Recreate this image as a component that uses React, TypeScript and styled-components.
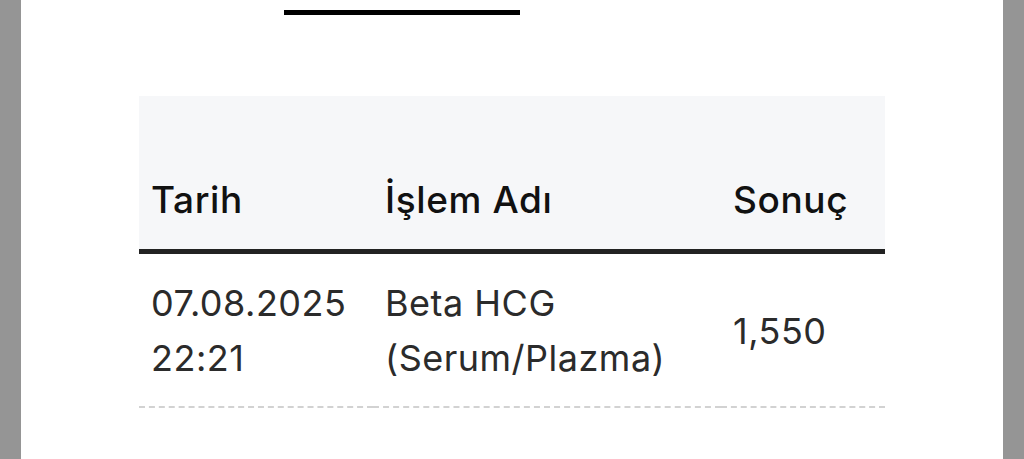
import React from 'react';
import styled, { createGlobalStyle } from 'styled-components'

const GlobalStyle = createGlobalStyle`
    html, body {
        margin: 0;
        padding: 0;
        background: #959595;
    }
    body {
        font-family: Inter, "Noto Sans", sans-serif;
    }
`

const Screen = styled.div`
    height: 459px;
    padding: 0 21px;
    background: #959595;
    overflow: hidden;
`

const Sheet = styled.div`
    height: 100%;
    background: #fff;
    padding-top: 10px;
    box-sizing: border-box;
`

const TabLine = styled.div`
    width: 236px;
    height: 5px;
    margin-left: 263px;
    background: #000;
`

const Table = styled.div`
    width: 746px;
    margin: 81px auto 0;
    display: grid;
    grid-template-columns: 234px 348px 164px;
`

const HeadCell = styled.div`
    background: #f6f7f9;
    height: 158px;
    box-sizing: border-box;
    padding: 0 12px 27px;
    display: flex;
    align-items: flex-end;
    font-size: 37px;
    font-weight: 500;
    letter-spacing: 0.6px;
    color: #111;
    border-bottom: 5px solid #222;
`

const Cell = styled.div<{ $center?: boolean }>`
    padding: 22px 12px 20px;
    display: flex;
    align-items: ${p => p.$center ? 'center' : 'flex-start'};
    font-size: 36px;
    line-height: 55px;
    letter-spacing: 0.5px;
    color: #2b2b2b;
    border-bottom: 2px dashed #d2d2d2;
`

const App = () => {
    return (
        <>
            <GlobalStyle />
            <Screen>
                <Sheet>
                    <TabLine />
                    <Table>
                        <HeadCell>Tarih</HeadCell>
                        <HeadCell>İşlem Adı</HeadCell>
                        <HeadCell>Sonuç</HeadCell>

                        <Cell>07.08.2025<br />22:21</Cell>
                        <Cell>Beta HCG<br />(Serum/Plazma)</Cell>
                        <Cell $center>1,550</Cell>
                    </Table>
                </Sheet>
            </Screen>
        </>
    )
}

export default App;
